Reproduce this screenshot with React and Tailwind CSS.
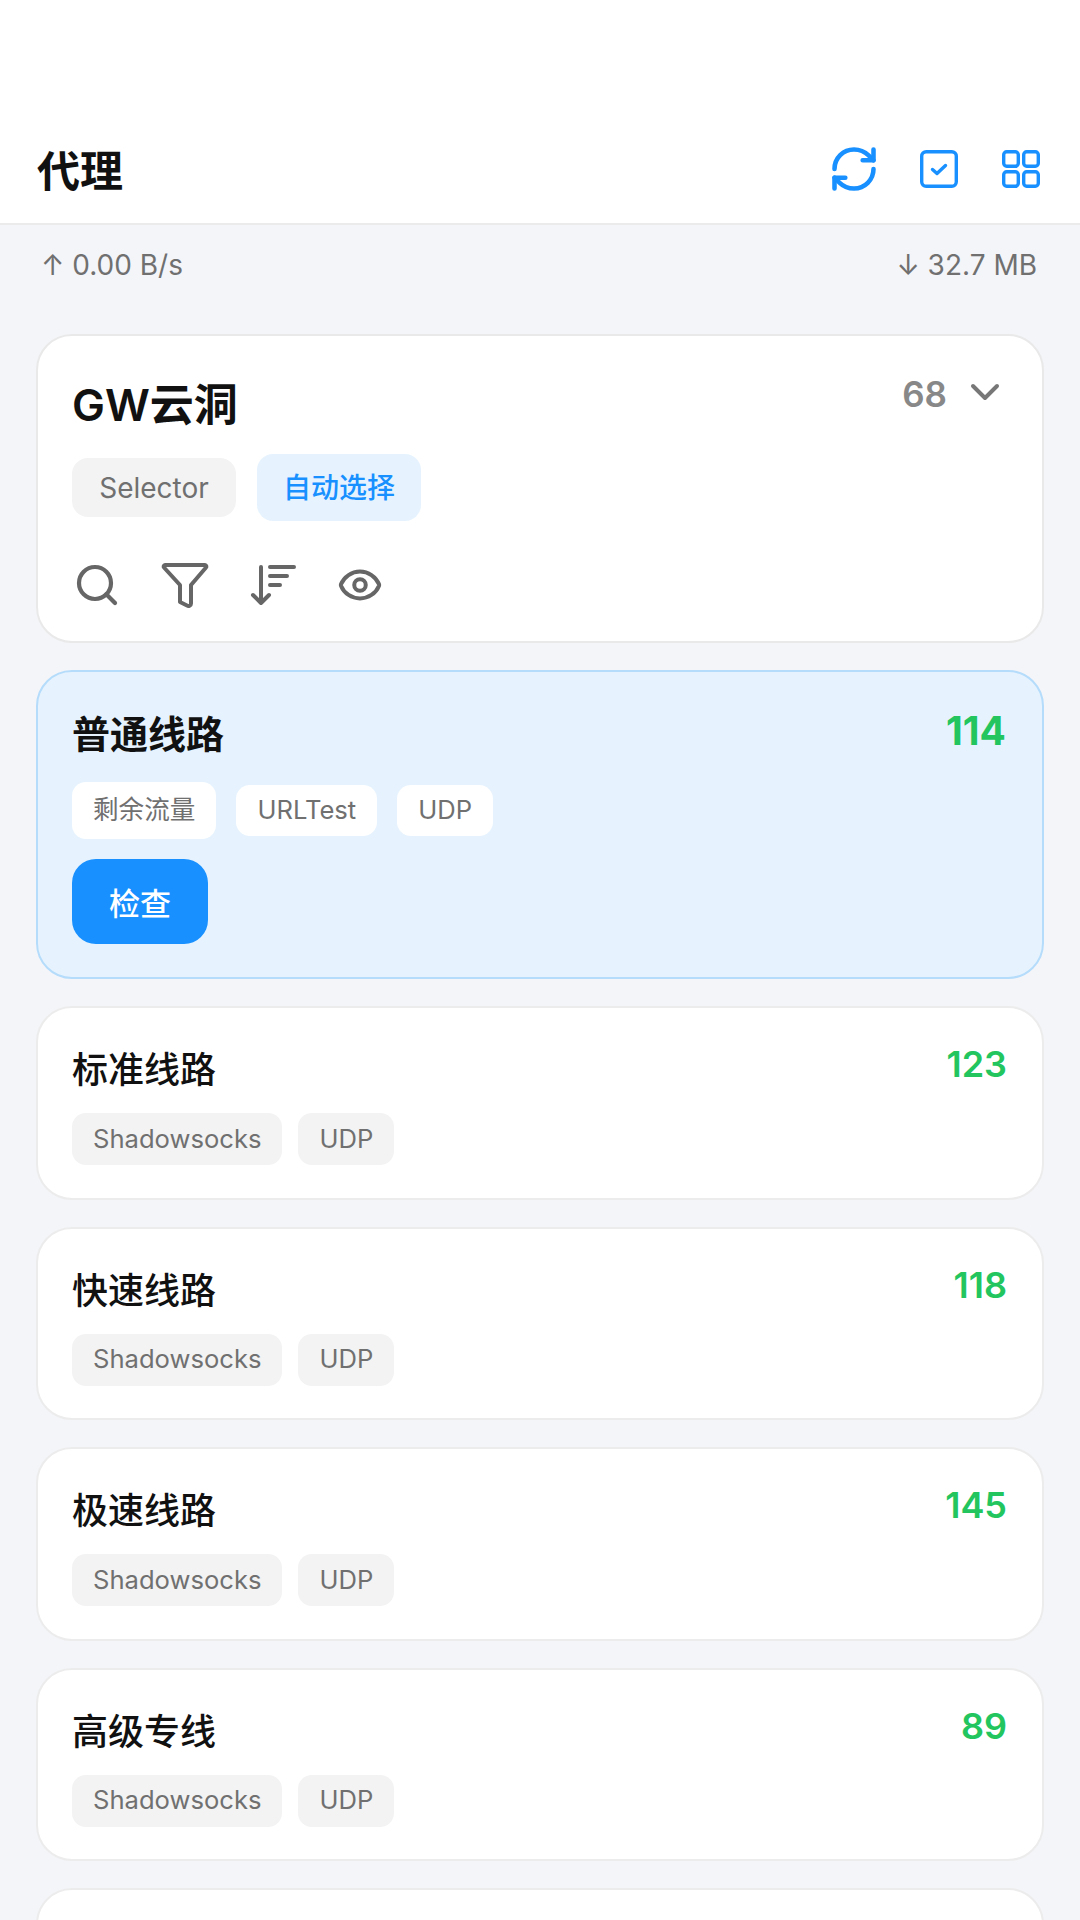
import React from "react";
import { RefreshCw, Search, Eye, ChevronDown } from "lucide-react";

const lines = [
  { name: "标准线路", count: 123 },
  { name: "快速线路", count: 118 },
  { name: "极速线路", count: 145 },
  { name: "高级专线", count: 89 },
];

const Tag = ({ children, className = "" }) => (
  <span className={`flex items-center justify-center rounded-[14px] px-[21px] text-[25.6px] text-[#707070] ${className}`}>
    {children}
  </span>
);

const CheckBox = () => (
  <svg width="38" height="38" viewBox="0 0 38 38" fill="none" stroke="#1890ff" strokeWidth="3.4" strokeLinecap="round" strokeLinejoin="round">
    <rect x="1.7" y="1.7" width="34.6" height="34.6" rx="4.5" />
    <path d="M12.5 19.5l4.5 4 8.5-8" />
  </svg>
);

const Grid = () => (
  <svg width="38" height="38" viewBox="0 0 38 38" fill="none" stroke="#1890ff" strokeWidth="3.4" strokeLinejoin="round">
    <rect x="1.7" y="1.7" width="14.6" height="14.6" rx="3" />
    <rect x="21.7" y="1.7" width="14.6" height="14.6" rx="3" />
    <rect x="1.7" y="21.7" width="14.6" height="14.6" rx="3" />
    <rect x="21.7" y="21.7" width="14.6" height="14.6" rx="3" />
  </svg>
);

const Funnel = () => (
  <svg width="48" height="48" viewBox="0 0 48 48" fill="none" stroke="#666666" strokeWidth="4" strokeLinecap="round" strokeLinejoin="round">
    <path d="M4 4h40a1.5 1.5 0 0 1 1 2.5L30 24v18.5a2.5 2.5 0 0 1-4 2l-7-3.5V24L3 6.5A1.5 1.5 0 0 1 4 4z" />
  </svg>
);

const SortDown = () => (
  <svg width="46" height="46" viewBox="0 0 46 46" fill="none" stroke="#666666" strokeWidth="4" strokeLinecap="round" strokeLinejoin="round">
    <path d="M11 5v36M3 33l8 8 8-8" />
    <path d="M20 5h24M20 14h17M20 23h10" />
  </svg>
);

const App = () => {
  return (
    <div
      className="h-[1920px] overflow-hidden bg-[#f4f5f9] text-[#111111]"
      style={{ fontFamily: 'Inter, "Noto Sans CJK SC", sans-serif' }}
    >
      <header className="flex h-[225px] items-center justify-between border-b-2 border-[#ebebeb] bg-white pt-[115px] pl-[37px] pr-[40px]">
        <h1 className="mt-[4px] text-[43px] font-bold">代理</h1>
        <div className="flex items-center">
          <RefreshCw size={52} strokeWidth={2.1} className="mr-[40px] text-[#1890ff]" />
          <CheckBox />
          <span className="ml-[44px]">
            <Grid />
          </span>
        </div>
      </header>

      <div className="flex justify-between px-[41px] pt-[23px] text-[28px] leading-[34px] text-[#707070]">
        <span>↑ 0.00 B/s</span>
        <span className="mr-[2px]">↓ 32.7 MB</span>
      </div>

      <main className="flex flex-col gap-[27px] px-[36px] pt-[52px]">
        <section className="h-[309px] rounded-[36px] border-2 border-[#e9e9e9] bg-white px-[34px] pt-[39px]">
          <div className="flex items-start justify-between">
            <h2 className="text-[44px] font-semibold leading-[60px]">GW云洞</h2>
            <div className="mt-[-7px] flex items-center gap-[14px] text-[35px] font-semibold leading-[44px] text-[#888888]">
              <span className="mt-[3px]">68</span>
              <ChevronDown size={48} strokeWidth={2} className="mr-[-1px] text-[#777777]" />
            </div>
          </div>
          <div className="mt-[19px] flex items-center gap-[21px]">
            <span className="flex h-[59px] w-[164px] items-center justify-center rounded-[16px] bg-[#f3f3f3] text-[28px] text-[#707070]">
              Selector
            </span>
            <span className="flex h-[67px] w-[164px] items-center justify-center rounded-[16px] bg-[#e6f3fe] text-[28px] font-medium text-[#1890ff]">
              自动选择
            </span>
          </div>
          <div className="mt-[37px] ml-[1px] flex items-center gap-[40px]">
            <span className="flex w-[48px] justify-center">
              <Search size={52} strokeWidth={2.1} className="text-[#666666]" />
            </span>
            <span className="flex w-[48px] justify-center">
              <Funnel />
            </span>
            <span className="flex w-[48px] justify-center">
              <SortDown />
            </span>
            <span className="flex w-[48px] justify-center">
              <Eye size={54} strokeWidth={2.1} className="mr-[2px] text-[#666666]" />
            </span>
          </div>
        </section>

        <section className="h-[309px] rounded-[36px] border-2 border-[#b5dcfb] bg-[#e6f3fe] px-[34px] pt-[35px]">
          <div className="flex items-start justify-between">
            <h3 className="text-[38px] font-semibold leading-[54px]">普通线路</h3>
            <span className="mr-[2px] mt-[-1px] text-[39px] font-bold leading-[50px] text-[#22c55e]">114</span>
          </div>
          <div className="mt-[21px] flex items-center gap-[20px]">
            <Tag className="h-[57px] bg-white">剩余流量</Tag>
            <Tag className="h-[51px] bg-white">URLTest</Tag>
            <Tag className="h-[51px] bg-white">UDP</Tag>
          </div>
          <button className="mt-[20px] block h-[85px] w-[136px] rounded-[24px] bg-[#1890ff] pt-[6px] text-[31px] font-medium text-white">
            检查
          </button>
        </section>

        {lines.map((line) => (
          <section key={line.name} className="h-[193.5px] rounded-[36px] border-2 border-[#ececec] bg-white px-[34px] pt-[37px]">
            <div className="flex items-start justify-between">
              <h3 className="text-[36px] font-medium leading-[50px]">{line.name}</h3>
              <span className="mr-[1px] mt-[-4px] text-[36px] font-semibold leading-[46px] text-[#22c55e]">{line.count}</span>
            </div>
            <div className="mt-[18px] flex items-center gap-[16px]">
              <Tag className="h-[52px] bg-[#f3f3f3]">Shadowsocks</Tag>
              <Tag className="h-[52px] bg-[#f3f3f3]">UDP</Tag>
            </div>
          </section>
        ))}

        <section className="h-[193.5px] rounded-[36px] border-2 border-[#ececec] bg-white" />
      </main>
    </div>
  );
};

export default App;
